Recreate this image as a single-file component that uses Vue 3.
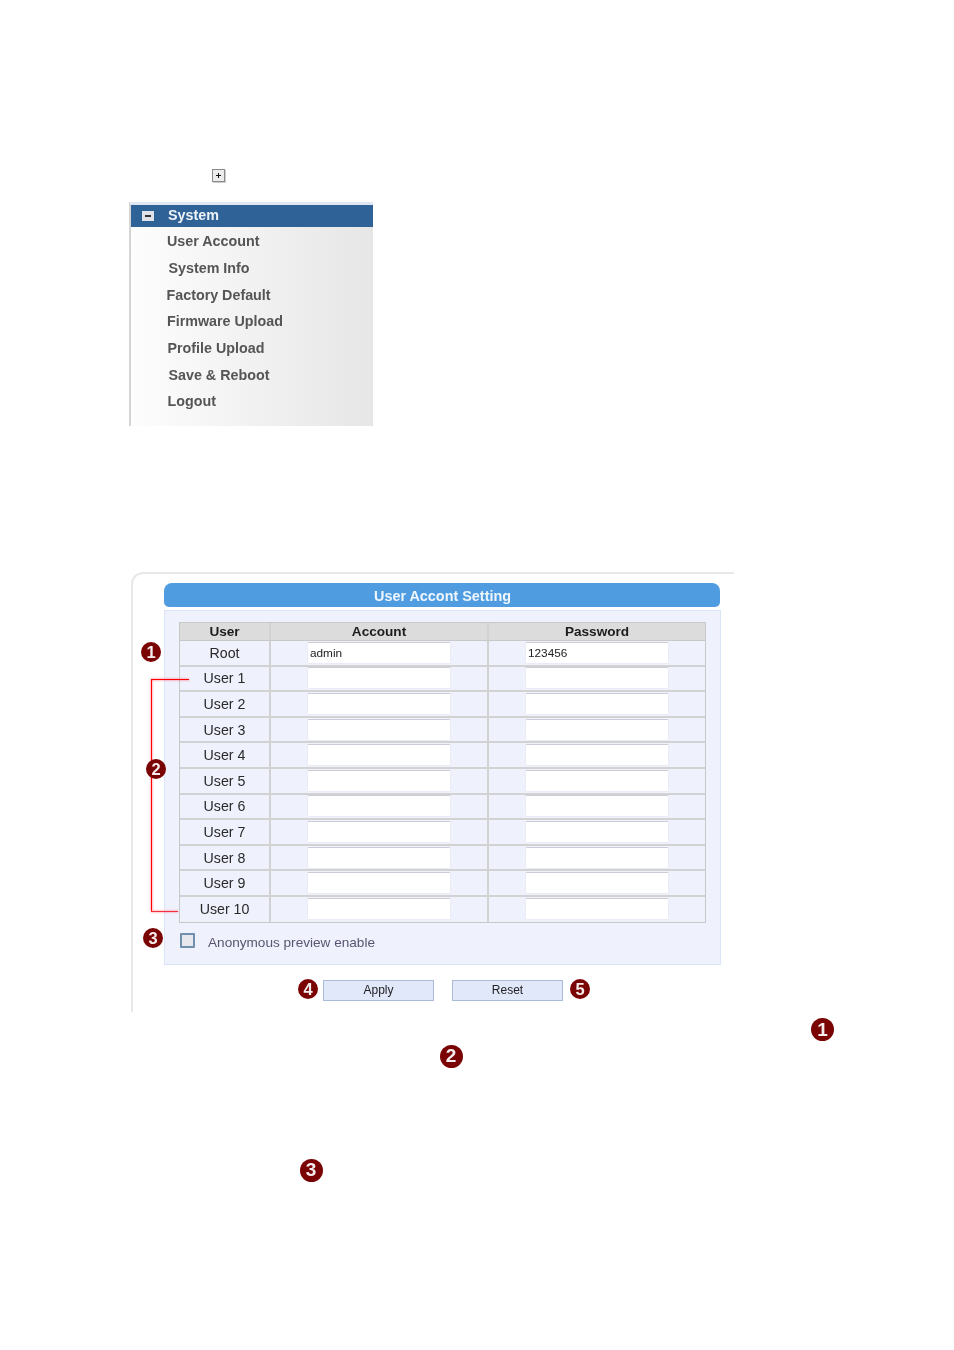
<script setup>
const menuItems = [
  { label: 'User Account', x: 36 },
  { label: 'System Info', x: 37.5 },
  { label: 'Factory Default', x: 35.5 },
  { label: 'Firmware Upload', x: 36 },
  { label: 'Profile Upload', x: 36.5 },
  { label: 'Save & Reboot', x: 37.5 },
  { label: 'Logout', x: 36.5 },
]
const rows = [
  { user: 'Root', account: 'admin', password: '123456' },
  ...Array.from({ length: 10 }, (_, i) => ({ user: `User ${i + 1}`, account: '', password: '' })),
]
const badges = [
  { n: 1, cls: 'b-a' }, { n: 2, cls: 'b-b' }, { n: 3, cls: 'b-c' }, { n: 4, cls: 'b-d' }, { n: 5, cls: 'b-e' },
  { n: 1, cls: 'b-f big' }, { n: 2, cls: 'b-g big' }, { n: 3, cls: 'b-h big' },
]
</script>

<template>
  <div class="page">
    <div class="plus-box"><span class="plus-h"></span><span class="plus-v"></span></div>

    <nav class="menu">
      <div class="menu-head">
        <span class="minus-box"><span class="minus"></span></span>
        <span class="menu-title">System</span>
      </div>
      <div
        v-for="item in menuItems"
        :key="item.label"
        class="menu-item"
        :style="{ paddingLeft: item.x + 'px' }"
      >{{ item.label }}</div>
    </nav>

    <section class="frame">
      <div class="title-bar">User Accont Setting</div>
      <div class="panel">
        <div class="grid">
          <div class="row head">
            <div class="cell">User</div>
            <div class="cell">Account</div>
            <div class="cell">Password</div>
          </div>
          <div v-for="r in rows" :key="r.user" class="row">
            <div class="cell user">{{ r.user }}</div>
            <div class="cell"><div class="input">{{ r.account }}</div></div>
            <div class="cell"><div class="input">{{ r.password }}</div></div>
          </div>
        </div>
        <div class="anon">
          <span class="check"></span>
          <span class="anon-label">Anonymous preview enable</span>
        </div>
      </div>
      <div class="actions">
        <button class="btn">Apply</button>
        <button class="btn">Reset</button>
      </div>
    </section>

    <div class="bracket"></div>
    <div class="bracket-tail"></div>
    <span v-for="b in badges" :key="b.cls" class="badge" :class="b.cls">{{ b.n }}</span>
  </div>
</template>

<style>
html, body { margin: 0; background: #fff; }
</style>

<style scoped>
.page {
  position: relative;
  width: 954px;
  height: 1350px;
  padding: 169px 0 0 129px;
  box-sizing: border-box;
  background: #fff;
  font-family: "Liberation Sans", Arial, sans-serif;
  overflow: hidden;
}
.plus-box {
  position: relative;
  width: 11px;
  height: 11px;
  margin-left: 83px;
  border: 1px solid #8a8a8a;
  box-shadow: 1px 1px 0 #ccc;
  background: #ececec;
  filter: blur(0.3px);
}
.plus-h, .plus-v { position: absolute; background: #111; }
.plus-h { left: 3px; top: 5px; width: 5px; height: 1px; }
.plus-v { left: 5px; top: 3px; width: 1px; height: 5px; }

.menu {
  width: 244px;
  height: 224px;
  margin-top: 20px;
  border-left: 2px solid #d5d5d5;
  border-top: 3px solid #dfe8f2;
  box-sizing: border-box;
  background: linear-gradient(90deg, #fdfdfd 0%, #e6e6e6 100%);
  filter: blur(0.4px);
}
.menu-head {
  display: flex;
  align-items: center;
  height: 22px;
  padding-bottom: 3px;
  box-sizing: border-box;
  margin-bottom: 1.3px;
  background: #2f6297;
}
.minus-box {
  display: flex;
  align-items: center;
  justify-content: center;
  width: 12px;
  height: 10px;
  margin: 3px 0 0 11px;
  background: #dfe3e8;
}
.minus { width: 6px; height: 2px; background: #333; }
.menu-title {
  margin-left: 14px;
  color: #eef3f8;
  font-size: 14.3px;
  font-weight: 700;
}
.menu-item {
  height: 26.7px;
  line-height: 26.7px;
  color: #555;
  font-size: 14.3px;
  font-weight: 700;
}

.frame {
  width: 603px;
  height: 440px;
  margin: 146px 0 0 2px;
  padding: 9px 0 0 31px;
  box-sizing: border-box;
  border-top: 2px solid #e8e8e8;
  border-left: 2px solid #e8e8e8;
  border-top-left-radius: 12px;
  filter: blur(0.3px);
}
.title-bar {
  width: 556px;
  height: 24px;
  line-height: 26px;
  padding-left: 1px;
  box-sizing: border-box;
  border-radius: 8px 8px 5px 5px;
  background: #4f9ce0;
  color: #eef6fd;
  font-size: 14.4px;
  font-weight: 700;
  text-align: center;
}
.panel {
  width: 557px;
  height: 355px;
  margin-top: 3px;
  padding: 11px 0 0 14px;
  box-sizing: border-box;
  border: 1px solid #dbe5f8;
  background: #eff1fd;
}
.grid {
  width: 527px;
  border: 1px solid #c8c8c8;
  box-sizing: border-box;
}
.row {
  display: grid;
  grid-template-columns: 91px 218px 1fr;
  height: 25.6px;
  border-bottom: 2px solid #d2d2d2;
  box-sizing: border-box;
}
.row:last-child { height: 24.6px; border-bottom: 0; }
.row.head {
  height: 18px;
  border-bottom: 1px solid #c8c8c8;
  background: #dcdcdc;
  font-size: 13.6px;
  font-weight: 700;
  color: #1c1c1c;
}
.cell {
  display: flex;
  align-items: center;
  justify-content: center;
  border-right: 2px solid #d2d2d2;
  box-sizing: border-box;
}
.cell:last-child { border-right: 0; }
.user {
  font-size: 14.2px;
  color: #2a2a2a;
}
.input {
  width: 144px;
  height: 22px;
  padding-left: 2px;
  box-sizing: border-box;
  line-height: 21px;
  border: 1px solid #e9ebf5;
  border-top-color: #ccccd6;
  border-radius: 2px;
  background: #fff;
  font-size: 11.8px;
  color: #222;
}
.anon {
  display: flex;
  align-items: center;
  height: 39px;
  padding-left: 1px;
}
.check {
  width: 11px;
  height: 11px;
  margin-top: -3px;
  border: 2px solid #6f8fad;
  border-radius: 1px;
  background: #e6e8ee;
}
.anon-label {
  margin-left: 13px;
  color: #5a5570;
  font-size: 13.6px;
}
.actions {
  display: flex;
  gap: 18px;
  margin: 15px 0 0 159px;
}
.btn {
  width: 111px;
  height: 21px;
  padding: 0 0 2px;
  box-sizing: border-box;
  border: 1px solid #a9bbd8;
  background: #e1e8fa;
  color: #222;
  font-family: inherit;
  font-size: 12px;
}

.bracket {
  position: absolute;
  left: 151px;
  top: 679px;
  width: 38px;
  height: 232px;
  box-sizing: border-box;
  border-left: 1px solid #f00;
  border-top: 1px solid #f00;
  filter: drop-shadow(0 0 1px #ff4050);
}
.bracket-tail {
  position: absolute;
  left: 151px;
  top: 911px;
  width: 27px;
  height: 1px;
  background: #f5303c;
  filter: drop-shadow(0 0 1px #ff6070);
}
.badge {
  position: absolute;
  display: flex;
  align-items: center;
  justify-content: center;
  width: 20px;
  height: 20px;
  margin: -10px 0 0 -10px;
  border-radius: 50%;
  background: #7a0303;
  color: #f6eeee;
  font-size: 16.5px;
  font-weight: 700;
  filter: blur(0.25px);
}
.badge.big {
  width: 23px;
  height: 23px;
  margin: -11.5px 0 0 -11.5px;
  font-size: 19px;
}
.b-a { left: 151px; top: 652px; }
.b-b { left: 156px; top: 769px; }
.b-c { left: 153px; top: 938px; }
.b-d { left: 308px; top: 989px; }
.b-e { left: 580px; top: 989px; }
.b-f { left: 822.5px; top: 1029.5px; }
.b-g { left: 451px; top: 1056px; }
.b-h { left: 311px; top: 1170px; }
</style>
